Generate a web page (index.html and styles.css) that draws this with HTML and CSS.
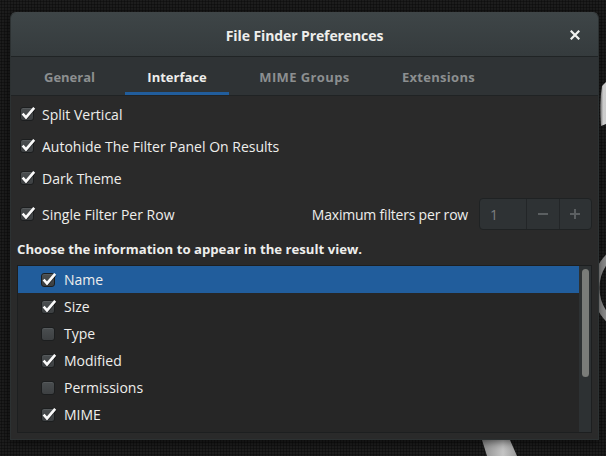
FILE: index.html
```html
<!DOCTYPE html>
<html>
<head>
<meta charset="utf-8">
<link rel="stylesheet" href="styles.css">
</head>
<body>
<div class="desktop">
  <svg class="wallpaper" width="606" height="456" viewBox="0 0 606 456">
    <defs>
      <linearGradient id="band" x1="0" y1="0" x2="1" y2="0">
        <stop offset="0" stop-color="#8a8a8a"/>
        <stop offset="0.5" stop-color="#e2e2e2"/>
        <stop offset="1" stop-color="#cfcfcf"/>
      </linearGradient>
      <linearGradient id="stripe" x1="0" y1="0" x2="1" y2="0">
        <stop offset="0" stop-color="#8c8c8c"/>
        <stop offset="0.6" stop-color="#c4c4c4"/>
        <stop offset="1" stop-color="#9a9a9a"/>
      </linearGradient>
    </defs>
    <path d="M606 82 L602 86 Q599 104 601 126 L606 124 Z" fill="url(#band)"/>
    <circle cx="640" cy="288" r="44" fill="none" stroke="#8d8d8d" stroke-width="7"/>
    <path d="M482 440 L510 440 L517 456 L487 456 Z" fill="url(#stripe)"/>
  </svg>

  <div class="window">
    <header class="titlebar">
      <span class="title">File Finder Preferences</span>
      <span class="close" aria-label="Close">
        <svg width="10" height="10" viewBox="0 0 10 10"><path d="M1.5 1.5 L8.5 8.5 M8.5 1.5 L1.5 8.5" stroke="#f2f2f0" stroke-width="2.2" stroke-linecap="square"/></svg>
      </span>
    </header>

    <nav class="tabs">
      <span class="tab tab-general">General</span>
      <span class="tab tab-interface active">Interface</span>
      <span class="tab tab-mime">MIME Groups</span>
      <span class="tab tab-ext">Extensions</span>
    </nav>

    <main class="content">
      <label class="check-row"><span class="cb checked"></span>Split Vertical</label>
      <label class="check-row"><span class="cb checked"></span>Autohide The Filter Panel On Results</label>
      <label class="check-row"><span class="cb checked"></span>Dark Theme</label>
      <div class="spin-row">
        <label class="check-row"><span class="cb checked"></span>Single Filter Per Row</label>
        <span class="spin-label">Maximum filters per row</span>
        <div class="spin">
          <span class="spin-entry">1</span>
          <span class="spin-btn">
            <svg width="12" height="12" viewBox="0 0 12 12"><path d="M1 6 H11" stroke="#5b5f61" stroke-width="2"/></svg>
          </span>
          <span class="spin-btn">
            <svg width="12" height="12" viewBox="0 0 12 12"><path d="M1 6 H11 M6 1 V11" stroke="#5b5f61" stroke-width="2"/></svg>
          </span>
        </div>
      </div>

      <h2 class="heading">Choose the information to appear in the result view.</h2>

      <div class="list">
        <div class="rows">
          <div class="row selected"><span class="cb checked"></span>Name</div>
          <div class="row"><span class="cb checked"></span>Size</div>
          <div class="row"><span class="cb"></span>Type</div>
          <div class="row"><span class="cb checked"></span>Modified</div>
          <div class="row"><span class="cb"></span>Permissions</div>
          <div class="row"><span class="cb checked"></span>MIME</div>
        </div>
        <div class="trough"><div class="thumb"></div></div>
      </div>
    </main>
  </div>
</div>
</body>
</html>
```

FILE: styles.css
```css
* { box-sizing: border-box; }

html, body {
  margin: 0;
  padding: 0;
}

body {
  font-family: "Open Sans", "Noto Sans", sans-serif;
  font-size: 14px;
  color: #eeeeec;
  background-color: #1d1d1d;
  background-image: radial-gradient(circle, #0f0f0f 0.9px, transparent 1.2px);
  background-size: 3px 3px;
}

.desktop {
  position: relative;
  width: 606px;
  height: 456px;
  padding: 12px 0 0 10px;
  overflow: hidden;
}

.wallpaper {
  position: absolute;
  left: 0;
  top: 0;
}

.window {
  position: relative;
  width: 589px;
  height: 428px;
  display: flex;
  flex-direction: column;
  background: #2a2a2a;
  border: 1px solid #2c3132;
  border-top-color: #3f4547;
  border-radius: 6px 6px 0 0;
  box-shadow: 0 2px 8px rgba(0, 0, 0, 0.6);
}

.titlebar {
  position: relative;
  height: 44px;
  flex: none;
  display: flex;
  align-items: center;
  justify-content: center;
  padding-top: 1px;
  background: linear-gradient(#3e4547, #353b3d);
  border-bottom: 1px solid #202425;
  border-radius: 5px 5px 0 0;
}

.title {
  font-weight: 700;
  font-size: 14px;
  color: #eeeeec;
  letter-spacing: -0.1px;
}

.close {
  position: absolute;
  right: 18px;
  top: 17px;
  width: 10px;
  height: 10px;
  display: flex;
}

.tabs {
  height: 39px;
  flex: none;
  display: flex;
  gap: 8px;
  padding-left: 11px;
  background: #2f3335;
  border-bottom: 1px solid #202324;
}

.tab {
  display: flex;
  align-items: center;
  justify-content: center;
  padding-top: 5px;
  font-weight: 700;
  font-size: 13px;
  color: #8c8f90;
  border-bottom: 3px solid transparent;
  white-space: nowrap;
}

.tab-general { width: 95px; }
.tab-interface { width: 104px; }
.tab-mime { width: 135px; letter-spacing: 0.4px; }
.tab-ext { width: 117px; letter-spacing: 0.3px; }

.tab.active {
  color: #eeeeec;
  border-bottom-color: #215d9c;
}

.content {
  flex: 1;
  display: flex;
  flex-direction: column;
  padding: 6px 6px 6px;
}

.check-row {
  height: 24px;
  display: flex;
  align-items: center;
  gap: 8px;
  padding-left: 3px;
  margin-bottom: 8px;
  white-space: nowrap;
}

.cb {
  position: relative;
  width: 14px;
  height: 14px;
  flex: none;
  border: 1px solid #1c1e1f;
  border-radius: 3px;
  background: linear-gradient(#4a4e50, #3d4042);
  box-shadow: inset 0 1px rgba(255, 255, 255, 0.07);
}

.cb.checked::after {
  content: "";
  position: absolute;
  left: -1px;
  top: -1px;
  width: 16px;
  height: 14px;
  background: url("data:image/svg+xml;utf8,<svg xmlns='http://www.w3.org/2000/svg' width='16' height='14' viewBox='0 0 16 14'><path d='M2.6 6.6 L6 10.4 L14.2 0.8' fill='none' stroke='%23000' stroke-opacity='0.5' stroke-width='2.8' transform='translate(0.3 0.8)'/><path d='M2.6 6.6 L6 10.4 L14.2 0.8' fill='none' stroke='%23fafafa' stroke-width='2.6'/></svg>") no-repeat;
}

.spin-row {
  height: 32px;
  display: flex;
  align-items: center;
}

.spin-row .check-row {
  margin-bottom: 0;
  flex: 1;
}

.spin-label {
  margin-right: 11px;
  white-space: nowrap;
  letter-spacing: -0.2px;
}

.spin {
  width: 113px;
  height: 32px;
  display: flex;
  border: 1px solid #1f2223;
  border-radius: 4px;
  background: #2e3234;
}

.spin-entry {
  width: 47px;
  display: flex;
  align-items: center;
  padding-left: 10px;
  color: #7c7f80;
  border-right: 1px solid #232628;
}

.spin-btn {
  flex: 1;
  display: flex;
  align-items: center;
  justify-content: center;
}

.spin-btn + .spin-btn {
  border-left: 1px solid #232628;
}

.heading {
  margin: 10px 0 7px;
  height: 18px;
  line-height: 19px;
  font-size: 13.2px;
  font-weight: 700;
  color: #eeeeec;
  white-space: nowrap;
}

.list {
  height: 168px;
  display: flex;
  border: 1px solid #1d1f20;
  background: #262626;
}

.rows {
  flex: 1;
}

.row {
  height: 27px;
  display: flex;
  align-items: center;
  gap: 9px;
  padding-left: 23px;
}

.row.selected {
  background: #215d9c;
}

.trough {
  width: 12px;
  flex: none;
  background: #2d3133;
  padding: 3px 2px 0 3px;
}

.thumb {
  width: 7px;
  height: 108px;
  border-radius: 4px;
  background: #7a7c79;
}
```
